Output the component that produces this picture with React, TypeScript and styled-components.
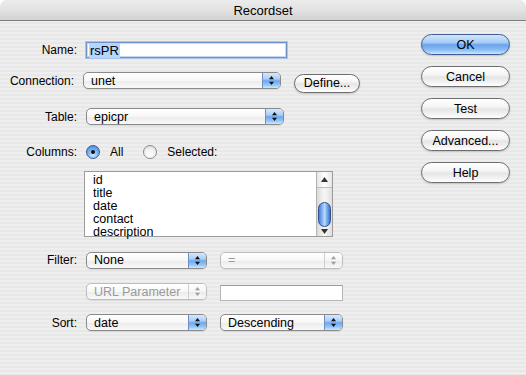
import { createGlobalStyle, styled, css } from "styled-components";

const GlobalStyle = createGlobalStyle`
  html, body {
    margin: 0;
    padding: 0;
    background: #ffffff;
  }
  body {
    font-family: "Liberation Sans", Arial, sans-serif;
    font-size: 12px;
    color: #000;
  }
`;

const Window = styled.div`
  width: 526px;
  height: 375px;
  overflow: hidden;
  border-radius: 7px 7px 0 0;
  background: repeating-linear-gradient(
    to bottom,
    #eeeeee 0px,
    #eeeeee 2px,
    #e8e8e8 2px,
    #e8e8e8 4px
  );
  display: flex;
  flex-direction: column;
`;

const TitleBar = styled.div`
  height: 21px;
  border-bottom: 1px solid #7d7d7d;
  background: linear-gradient(#ececec 0%, #e2e2e2 50%, #d2d2d2 100%);
  display: flex;
  align-items: center;
  justify-content: center;
  font-size: 13px;
  padding-top: 1px;
  box-sizing: border-box;
`;

const Body = styled.div`
  flex: 1;
  display: flex;
`;

const Form = styled.div`
  width: 360px;
  display: flex;
  flex-direction: column;
  padding-top: 21px;
`;

const Row = styled.div<{ $mt: number; $h: number }>`
  display: flex;
  align-items: center;
  margin-top: ${(p) => p.$mt}px;
  height: ${(p) => p.$h}px;
`;

const Label = styled.div`
  width: 77px;
  margin-right: 9px;
  text-align: right;
  white-space: nowrap;
`;

const Controls = styled.div<{ $gap?: number }>`
  display: flex;
  align-items: center;
  gap: ${(p) => p.$gap ?? 13}px;
`;

const NameInput = styled.div`
  width: 201px;
  height: 16px;
  box-sizing: border-box;
  border: 1px solid #6f93c9;
  box-shadow: 0 0 0 1px #a9c5ea, inset 0 0 0 1px #c7daf2;
  background: #fff;
  display: flex;
  align-items: center;
  padding-left: 2px;
  font-size: 13px;
`;

const Selection = styled.span`
  background: #b5d5ff;
  padding: 0 1px;
`;

const PopupBox = styled.div<{ $w: number; $disabled?: boolean }>`
  width: ${(p) => p.$w}px;
  height: 17px;
  box-sizing: border-box;
  border: 1px solid ${(p) => (p.$disabled ? "#bdbdbd" : "#8a8a8a")};
  border-radius: 5px;
  display: flex;
  overflow: hidden;
  background: linear-gradient(#ffffff 0%, #f7f7f7 50%, #ececec 55%, #f9f9f9 100%);
  color: ${(p) => (p.$disabled ? "#9a9a9a" : "#000")};
  box-shadow: 0 1px 1px rgba(0, 0, 0, 0.08);
`;

const PopupValue = styled.div`
  flex: 1;
  padding-left: 7px;
  display: flex;
  align-items: center;
  font-size: 12.5px;
  white-space: nowrap;
`;

const PopupArrows = styled.div<{ $disabled?: boolean }>`
  width: 17px;
  border-left: 1px solid ${(p) => (p.$disabled ? "#cfcfcf" : "#6f8fc4")};
  display: flex;
  align-items: center;
  justify-content: center;
  ${(p) =>
    p.$disabled
      ? css`
          background: linear-gradient(#ffffff 0%, #f5f5f5 50%, #ebebeb 55%, #f8f8f8 100%);
        `
      : css`
          background: linear-gradient(
            #d6e8fd 0%,
            #a9cdf7 40%,
            #6fa7ee 52%,
            #94c6f8 80%,
            #cfe9fe 100%
          );
        `}
`;

const PushButton = styled.div<{ $w: number; $h: number; $default?: boolean }>`
  width: ${(p) => p.$w}px;
  height: ${(p) => p.$h}px;
  box-sizing: border-box;
  border-radius: ${(p) => p.$h / 2}px;
  display: flex;
  align-items: center;
  justify-content: center;
  font-size: 12.5px;
  box-shadow: 0 1px 2px rgba(0, 0, 0, 0.18);
  ${(p) =>
    p.$default
      ? css`
          border: 1px solid #3f5c94;
          background: linear-gradient(
            #d2e6fd 0%,
            #a6ccf6 40%,
            #6aa3ec 52%,
            #8cc0f6 80%,
            #cbe8ff 100%
          );
        `
      : css`
          border: 1px solid #6d6d6d;
          background: linear-gradient(
            #ffffff 0%,
            #f6f6f6 40%,
            #e6e6e6 52%,
            #f2f2f2 80%,
            #ffffff 100%
          );
        `}
`;

const DefineButton = styled(PushButton)`
  margin-top: 5px;
`;

const ButtonColumn = styled.div`
  display: flex;
  flex-direction: column;
  gap: 11px;
  padding-top: 13px;
  margin-left: 61px;
`;

const RadioGroup = styled.label`
  display: flex;
  align-items: center;
  gap: 10px;
`;

const RadioCircle = styled.div<{ $on?: boolean }>`
  width: 14px;
  height: 14px;
  box-sizing: border-box;
  border-radius: 50%;
  display: flex;
  align-items: center;
  justify-content: center;
  ${(p) =>
    p.$on
      ? css`
          border: 1px solid #3c5b95;
          background: radial-gradient(
            circle at 50% 75%,
            #c9eaff 0%,
            #7fb5f3 45%,
            #3f7fdc 100%
          );
        `
      : css`
          border: 1px solid #8a8a8a;
          background: radial-gradient(
            circle at 50% 75%,
            #ffffff 0%,
            #f2f2f2 50%,
            #d4d4d4 100%
          );
        `}
`;

const RadioDot = styled.div`
  width: 4px;
  height: 4px;
  border-radius: 50%;
  background: #111;
`;

const ListBox = styled.div`
  width: 249px;
  height: 66px;
  box-sizing: border-box;
  margin-left: -2px;
  border: 1px solid #9b9b9b;
  background: #fff;
  display: flex;
`;

const ListItems = styled.div`
  flex: 1;
  padding: 2px 0 0 8px;
  font-size: 12.5px;
  line-height: 13px;
`;

const ScrollBar = styled.div`
  width: 15px;
  border-left: 1px solid #b3b3b3;
  display: flex;
  flex-direction: column;
  background: linear-gradient(to right, #d8d8d8, #f4f4f4 40%, #f4f4f4 60%, #dedede);
`;

const ScrollArrow = styled.div<{ $h: number }>`
  height: ${(p) => p.$h}px;
  display: flex;
  align-items: center;
  justify-content: center;
  background: linear-gradient(to right, #e6e6e6, #ffffff 50%, #e6e6e6);
`;

const ScrollSep = styled.div`
  height: 1px;
  background: #bdbdbd;
`;

const Track = styled.div`
  flex: 1;
  display: flex;
  flex-direction: column;
  justify-content: flex-end;
  align-items: center;
`;

const Thumb = styled.div`
  width: 13px;
  height: 25px;
  box-sizing: border-box;
  border-radius: 7px;
  border: 1px solid #2f4f91;
  background: linear-gradient(
    to right,
    #4a7fd6 0%,
    #8fbdf5 35%,
    #b9dafd 50%,
    #7fb0f0 70%,
    #3e72cc 100%
  );
`;

const TextField = styled.div`
  width: 123px;
  height: 16px;
  margin-top: 2px;
  box-sizing: border-box;
  border: 1px solid #b5b5b5;
  border-top-color: #9a9a9a;
  background: #fff;
`;

function UpDown({ color }: { color: string }) {
  return (
    <svg width="7" height="11" viewBox="0 0 7 11">
      <path d="M3.5 1 L6 4.2 L1 4.2 Z" fill={color} />
      <path d="M3.5 10 L6 6.8 L1 6.8 Z" fill={color} />
    </svg>
  );
}

function Popup({
  w,
  value,
  disabled,
}: {
  w: number;
  value: string;
  disabled?: boolean;
}) {
  return (
    <PopupBox $w={w} $disabled={disabled}>
      <PopupValue>{value}</PopupValue>
      <PopupArrows $disabled={disabled}>
        <UpDown color={disabled ? "#9d9d9d" : "#111"} />
      </PopupArrows>
    </PopupBox>
  );
}

export default function App() {
  return (
    <>
      <GlobalStyle />
      <Window>
        <TitleBar>Recordset</TitleBar>
        <Body>
          <Form>
            <Row $mt={0} $h={16}>
              <Label>Name:</Label>
              <NameInput>
                <Selection>rsPR</Selection>
              </NameInput>
            </Row>
            <Row $mt={14} $h={17}>
              <Label>Connection:</Label>
              <Controls>
                <Popup w={198} value="unet" />
                <DefineButton $w={66} $h={19}>
                  Define...
                </DefineButton>
              </Controls>
            </Row>
            <Row $mt={19} $h={17}>
              <Label>Table:</Label>
              <Popup w={198} value="epicpr" />
            </Row>
            <Row $mt={19} $h={15}>
              <Label>Columns:</Label>
              <Controls $gap={20}>
                <RadioGroup>
                  <RadioCircle $on>
                    <RadioDot />
                  </RadioCircle>
                  All
                </RadioGroup>
                <RadioGroup>
                  <RadioCircle />
                  Selected:
                </RadioGroup>
              </Controls>
            </Row>
            <Row $mt={12} $h={66}>
              <Label />
              <ListBox>
                <ListItems>
                  <div>id</div>
                  <div>title</div>
                  <div>date</div>
                  <div>contact</div>
                  <div>description</div>
                </ListItems>
                <ScrollBar>
                  <ScrollArrow $h={15}>
                    <svg width="7" height="5" viewBox="0 0 7 5">
                      <path d="M3.5 0 L7 5 L0 5 Z" fill="#333" />
                    </svg>
                  </ScrollArrow>
                  <ScrollSep />
                  <Track>
                    <Thumb />
                    <ScrollArrow $h={9}>
                      <svg width="7" height="5" viewBox="0 0 7 5">
                        <path d="M0 0 L7 0 L3.5 5 Z" fill="#333" />
                      </svg>
                    </ScrollArrow>
                  </Track>
                </ScrollBar>
              </ListBox>
            </Row>
            <Row $mt={15} $h={16}>
              <Label>Filter:</Label>
              <Controls>
                <Popup w={121} value="None" />
                <Popup w={123} value="=" disabled />
              </Controls>
            </Row>
            <Row $mt={15} $h={17}>
              <Label>&nbsp;</Label>
              <Controls>
                <Popup w={121} value="URL Parameter" disabled />
                <TextField />
              </Controls>
            </Row>
            <Row $mt={14} $h={17}>
              <Label>Sort:</Label>
              <Controls>
                <Popup w={121} value="date" />
                <Popup w={123} value="Descending" />
              </Controls>
            </Row>
          </Form>
          <ButtonColumn>
            <PushButton $w={89} $h={21} $default>
              OK
            </PushButton>
            <PushButton $w={89} $h={21}>
              Cancel
            </PushButton>
            <PushButton $w={89} $h={21}>
              Test
            </PushButton>
            <PushButton $w={89} $h={21}>
              Advanced...
            </PushButton>
            <PushButton $w={89} $h={21}>
              Help
            </PushButton>
          </ButtonColumn>
        </Body>
      </Window>
    </>
  );
}
